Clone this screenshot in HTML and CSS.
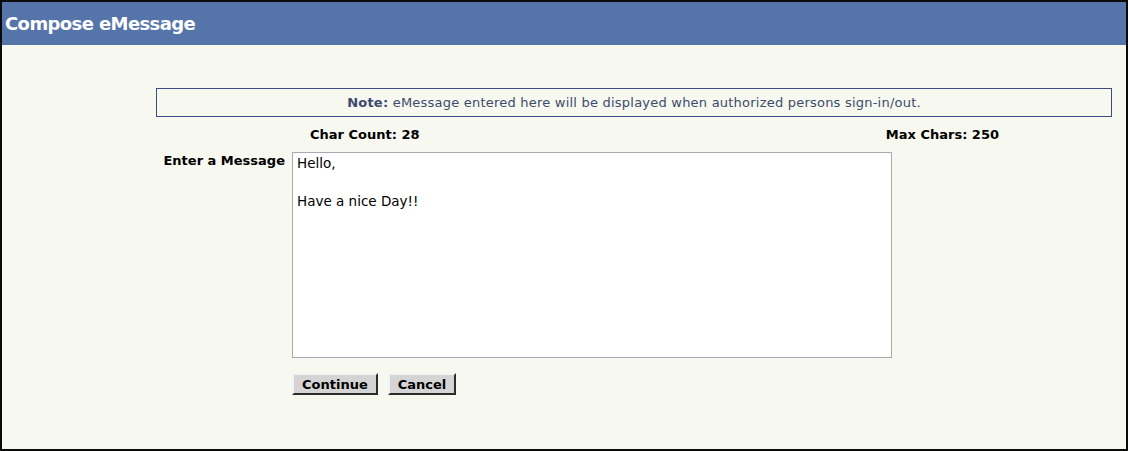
FILE: index.html
```html
<!DOCTYPE html>
<html>
<head>
<meta charset="utf-8">
<title>Compose eMessage</title>
<link rel="stylesheet" href="styles.css">
</head>
<body>
<div class="frame">
  <div class="header">Compose eMessage</div>
  <div class="content">
    <div class="note"><b>Note:</b> eMessage entered here will be displayed when authorized persons sign-in/out.</div>
    <div class="form">
      <div class="cell"></div>
      <div class="counts">
        <span>Char Count: 28</span>
        <span>Max Chars: 250</span>
      </div>
      <label class="label" for="msg">Enter a Message</label>
      <textarea id="msg" class="message">Hello,

Have a nice Day!!</textarea>
      <div class="cell"></div>
      <div class="buttons">
        <button class="btn">Continue</button>
        <button class="btn">Cancel</button>
      </div>
    </div>
  </div>
</div>
</body>
</html>
```

FILE: styles.css
```css
html, body {
  margin: 0;
  padding: 0;
}
body {
  font-family: "DejaVu Sans", Verdana, sans-serif;
  font-size: 13px;
  background: #f7f8ef;
}
.frame {
  box-sizing: border-box;
  width: 1128px;
  height: 451px;
  border: 2px solid #0a0a0a;
  background: #f7f8ef;
}
.header {
  height: 43px;
  box-sizing: border-box;
  background: #5574aa;
  color: #ffffff;
  font-weight: bold;
  font-size: 18px;
  letter-spacing: -0.6px;
  line-height: 43px;
  padding-left: 3px;
}
.content {
  padding: 43px 14px 0 154px;
}
.note {
  box-sizing: border-box;
  height: 29px;
  border: 1px solid #3d4a85;
  text-align: center;
  line-height: 27px;
  color: #3d4b6c;
  font-size: 13px;
  letter-spacing: 0.22px;
}
.note b {
  color: #3b4a6e;
}
.form {
  display: grid;
  grid-template-columns: 136px 1fr;
  padding-top: 8px;
}
.counts {
  display: flex;
  justify-content: space-between;
  padding: 0 113px 0 18px;
  height: 27px;
  line-height: 20px;
  font-weight: bold;
  color: #000;
}
.label {
  font-weight: bold;
  color: #000;
  text-align: right;
  padding-right: 7px;
  padding-top: 1px;
  line-height: 16px;
}
.message {
  box-sizing: border-box;
  width: 600px;
  height: 206px;
  border: 1px solid #a9a9b4;
  background: #fff;
  margin: 0;
  padding: 1px 4px;
  font-family: "DejaVu Sans", Verdana, sans-serif;
  font-size: 13.5px;
  line-height: 19px;
  color: #000;
  resize: none;
  outline: none;
}
.buttons {
  display: flex;
  gap: 10px;
  padding-top: 15px;
}
.btn {
  box-sizing: border-box;
  height: 22px;
  padding: 0 8px;
  background: #d4d4d4;
  border: 2px outset #e8e8e8;
  border-color: #f4f4f4 #808080 #808080 #f4f4f4;
  font-family: "DejaVu Sans", Verdana, sans-serif;
  font-weight: bold;
  font-size: 13px;
  color: #000;
}
```
